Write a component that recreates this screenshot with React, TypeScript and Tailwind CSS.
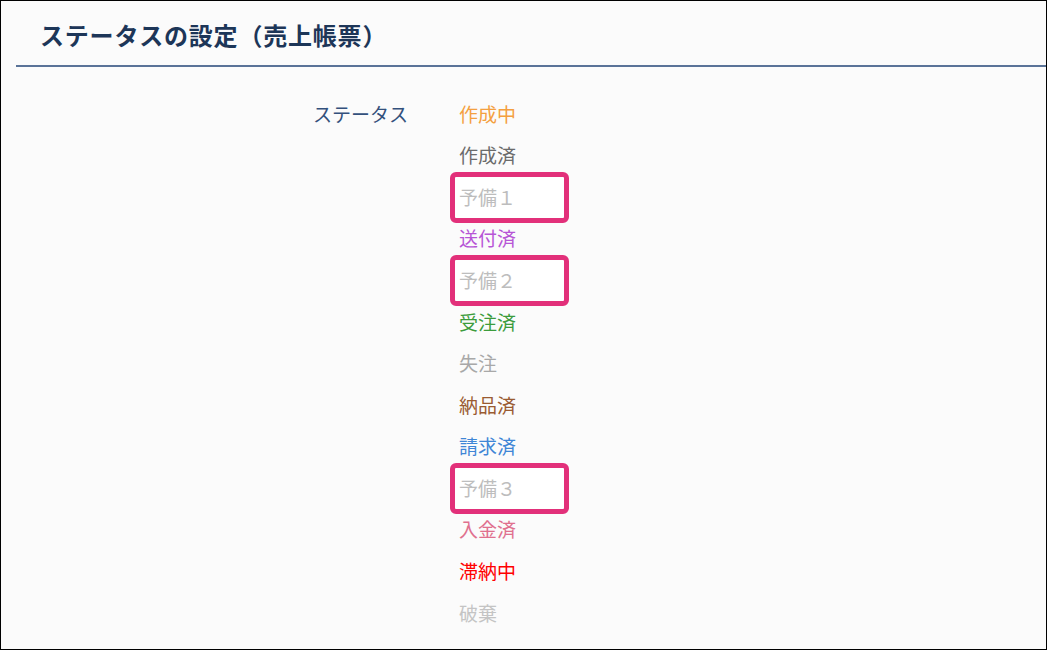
import React from "react";

type Item = { label: string; color: string; highlight?: boolean };

const items: Item[] = [
  { label: "作成中", color: "text-[#f4a040]" },
  { label: "作成済", color: "text-[#6b6b6b]" },
  { label: "予備１", color: "text-[#bdbdbd]", highlight: true },
  { label: "送付済", color: "text-[#b755d6]" },
  { label: "予備２", color: "text-[#bdbdbd]", highlight: true },
  { label: "受注済", color: "text-[#3c9c3c]" },
  { label: "失注", color: "text-[#a8a8a8]" },
  { label: "納品済", color: "text-[#9a5b32]" },
  { label: "請求済", color: "text-[#3f86d6]" },
  { label: "予備３", color: "text-[#bdbdbd]", highlight: true },
  { label: "入金済", color: "text-[#e0708e]" },
  { label: "滞納中", color: "text-[#ff0000]" },
  { label: "破棄", color: "text-[#c4c4c4]" },
];

export default function App() {
  return (
    <div
      className="w-[1047px] h-[650px] border border-black bg-[#fbfbfb] overflow-hidden"
      style={{ fontFamily: '"Noto Sans CJK JP", "Noto Sans", sans-serif' }}
    >
      <div className="ml-[15px] h-[66px] border-b-2 border-[#5a7398] pl-[24px] pt-[16px]">
        <h1 className="text-[24px] leading-[36px] font-bold text-[#1d3658] tracking-[0.8px]">
          ステータスの設定（売上帳票）
        </h1>
      </div>
      <div className="flex pt-[26px] pl-[312px]">
        <div className="w-[146px] h-[41.6px] flex items-center text-[19px] text-[#33507c]">
          ステータス
        </div>
        <div className="flex flex-col">
          {items.map((it) => (
            <div
              key={it.label}
              className="relative h-[41.6px] flex items-center text-[19px]"
            >
              {it.highlight && (
                <div className="absolute left-[-9px] w-[119px] top-[-4px] bottom-[-5px] rounded-[6px] border-[5px] border-[#e2307a] bg-white" />
              )}
              <span className={`relative ${it.color}`}>{it.label}</span>
            </div>
          ))}
        </div>
      </div>
    </div>
  );
}
